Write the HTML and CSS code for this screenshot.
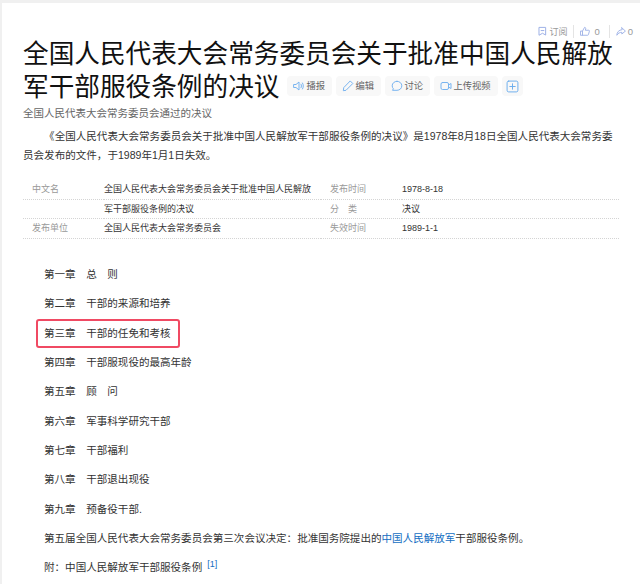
FILE: index.html
```html
<!DOCTYPE html>
<html lang="zh-CN">
<head>
<meta charset="utf-8">
<title>全国人民代表大会常务委员会关于批准中国人民解放军干部服役条例的决议</title>
<link rel="stylesheet" href="styles.css">
</head>
<body>
<main class="page">
  <div class="top-actions">
    <span class="top-item top-sub"><svg class="ico-s" viewBox="0 0 10 11"><path d="M1.500 1.500h7v8.500L5 8 1.500 10z M3.500 5h3"/></svg>订阅</span>
    <span class="sep"></span>
    <span class="top-item top-like"><svg class="ico-m" viewBox="0 0 12 12"><path d="M1 5.500h2v5H1z M3 5.500 5.500 1c1.200 0 1.600 1 1.300 2L6.400 4.500H10.500c.6 0 1 .5.8 1.100l-1.200 4.200c-.1.4-.5.7-.9.7H3"/></svg><span class="num">0</span></span>
    <span class="sep"></span>
    <span class="top-item top-share"><svg class="ico-m" viewBox="0 0 12 12"><path d="M7 1.500 11.300 5.500 7 9V7C4.500 7 2.500 8 1 10.500 1 7 3.500 4 7 3.800z"/></svg><span class="num">0</span></span>
  </div>
  <h1 class="title">全国人民代表大会常务委员会关于批准中国人民解放<br>军干部服役条例的决议<span class="tools">
    <span class="tool"><svg class="ico-t" viewBox="0 0 12 12"><path d="M1 4.500h2L6 2v8L3 7.500H1z M8 4.200c.6 1 .6 2.600 0 3.600 M9.500 3c1.100 1.800 1.100 4.200 0 6"/></svg>播报</span>
    <span class="tool"><svg class="ico-t" viewBox="0 0 12 12"><path d="M8.500 1.200 10.800 3.500 4 10.300 1.300 10.700 1.700 8z"/></svg>编辑</span>
    <span class="tool"><svg class="ico-t" viewBox="0 0 12 12"><path d="M6 1.300c2.700 0 4.800 2 4.800 4.500S8.700 10.300 6 10.300H1.500l.9-1.500C1.600 8 1.200 7 1.200 5.800 1.200 3.300 3.300 1.300 6 1.300z"/></svg>讨论</span>
    <span class="tool"><svg class="ico-t" viewBox="0 0 12 12"><rect x="1" y="2.500" width="7.500" height="7" rx="1.500"/><path d="M8.500 5 11 3.500v5L8.500 7"/></svg>上传视频</span>
    <span class="tool tool-add"><svg class="ico-add" viewBox="0 0 12 12"><rect x="1" y="1" width="10" height="10" rx="1.500"/><path d="M6 3.500v5M3.500 6h5"/></svg></span>
  </span></h1>
  <p class="subtitle">全国人民代表大会常务委员会通过的决议</p>
  <p class="intro">《全国人民代表大会常务委员会关于批准中国人民解放军干部服役条例的决议》是1978年8月18日全国人民代表大会常务委员会发布的文件，于1989年1月1日失效。</p>
  <dl class="info">
    <dt>中文名</dt><dd>全国人民代表大会常务委员会关于批准中国人民解放</dd><dt>发布时间</dt><dd>1978-8-18</dd>
    <dt></dt><dd>军干部服役条例的决议</dd><dt>分　类</dt><dd>决议</dd>
    <dt>发布单位</dt><dd>全国人民代表大会常务委员会</dd><dt>失效时间</dt><dd>1989-1-1</dd>
  </dl>
  <div class="content">
    <p>第一章　总　则</p>
    <p>第二章　干部的来源和培养</p>
    <p class="marked">第三章　干部的任免和考核<span class="mark-box"></span></p>
    <p>第四章　干部服现役的最高年龄</p>
    <p>第五章　顾　问</p>
    <p>第六章　军事科学研究干部</p>
    <p>第七章　干部福利</p>
    <p>第八章　干部退出现役</p>
    <p>第九章　预备役干部.</p>
    <p>第五届全国人民代表大会常务委员会第三次会议决定：批准国务院提出的<a href="#">中国人民解放军</a>干部服役条例。</p>
    <p>附：中国人民解放军干部服役条例 <sup>[1]</sup></p>
  </div>
</main>
</body>
</html>
```
FILE: styles.css
```css
html, body { margin: 0; padding: 0; }
body {
  width: 640px;
  height: 584px;
  overflow: hidden;
  background: #f0f0f0;
  font-family: "Liberation Sans", "Noto Sans CJK SC", sans-serif;
  color: #333;
}
.page {
  margin: 3px 0 0 2px;
  height: 581px;
  background: #fff;
  padding: 21px 0 0 21px;
  box-sizing: border-box;
  overflow: hidden;
}
.top-actions {
  height: 14px;
  display: flex;
  justify-content: flex-end;
  align-items: center;
  gap: 6px;
  padding-right: 7px;
  font-size: 9px;
  color: #999;
}
.top-item { display: inline-flex; align-items: center; }
.top-sub { gap: 2px; }
.top-like { gap: 4px; margin-right: 3px; }
.top-share { gap: 2px; }
.num { font-size: 9.500px; }
.sep { width: 1px; height: 13px; background: #e4e4e4; }
svg { fill: none; stroke-linejoin: round; stroke-linecap: round; flex: none; }
.ico-s { width: 9px; height: 10px; stroke: #9db0e6; stroke-width: 1.100; }
.ico-m { width: 10px; height: 11px; stroke: #9db0e6; stroke-width: 1.100; }
.title {
  margin: 0;
  font-size: 25.650px;
  line-height: 33px;
  font-weight: 400;
  color: #111;
  white-space: nowrap;
}
.tools { display: inline-flex; gap: 4px; margin-left: 8px; vertical-align: 4px; }
.tool {
  height: 20px;
  padding: 0 7.400px 0 6px;
  display: inline-flex;
  align-items: center;
  gap: 1px;
  background: #f8f8f8;
  border-radius: 4px;
  font-size: 9.300px;
  line-height: 20px;
  color: #666;
}
.tool-add { padding: 0 4px; }
.ico-t { width: 12px; height: 12px; stroke: #78b4f0; stroke-width: 1; }
.ico-add { width: 13px; height: 13px; stroke: #6caeee; stroke-width: .9; }
.subtitle {
  margin: 1px 0 0;
  font-size: 10.500px;
  line-height: 16px;
  color: #666;
}
.intro {
  margin: 6px 21px 0 0;
  font-size: 10.560px;
  line-height: 19px;
  text-indent: 2em;
  width: 592px;
  color: #333;
}
.info {
  margin: 15px 0 0;
  width: 596px;
  display: grid;
  grid-template-columns: 81px 217px 81px 217px;
  font-size: 9px;
  line-height: 19.500px;
}
.info dt, .info dd {
  margin: 0;
  height: 19.500px;
  border-bottom: 1px dotted #d4d4d4;
  box-sizing: border-box;
  white-space: nowrap;
}
.info dt { padding-left: 9px; color: #999; }
.info dd { color: #333; }
.content { margin: 26.500px 0 0; font-size: 10.550px; line-height: 19.300px; }
.content p { margin: 0 0 10.050px; padding-left: 21px; position: relative; color: #333; }
.content a { color: #136ec2; text-decoration: none; }
.content sup { font-size: 9px; color: #136ec2; line-height: 0; margin-left: 2px; }
.mark-box {
  position: absolute;
  left: 13px;
  top: -5px;
  width: 144px;
  height: 29px;
  box-sizing: border-box;
  border: 2.500px solid #f04a63;
  border-radius: 3px;
}
```
